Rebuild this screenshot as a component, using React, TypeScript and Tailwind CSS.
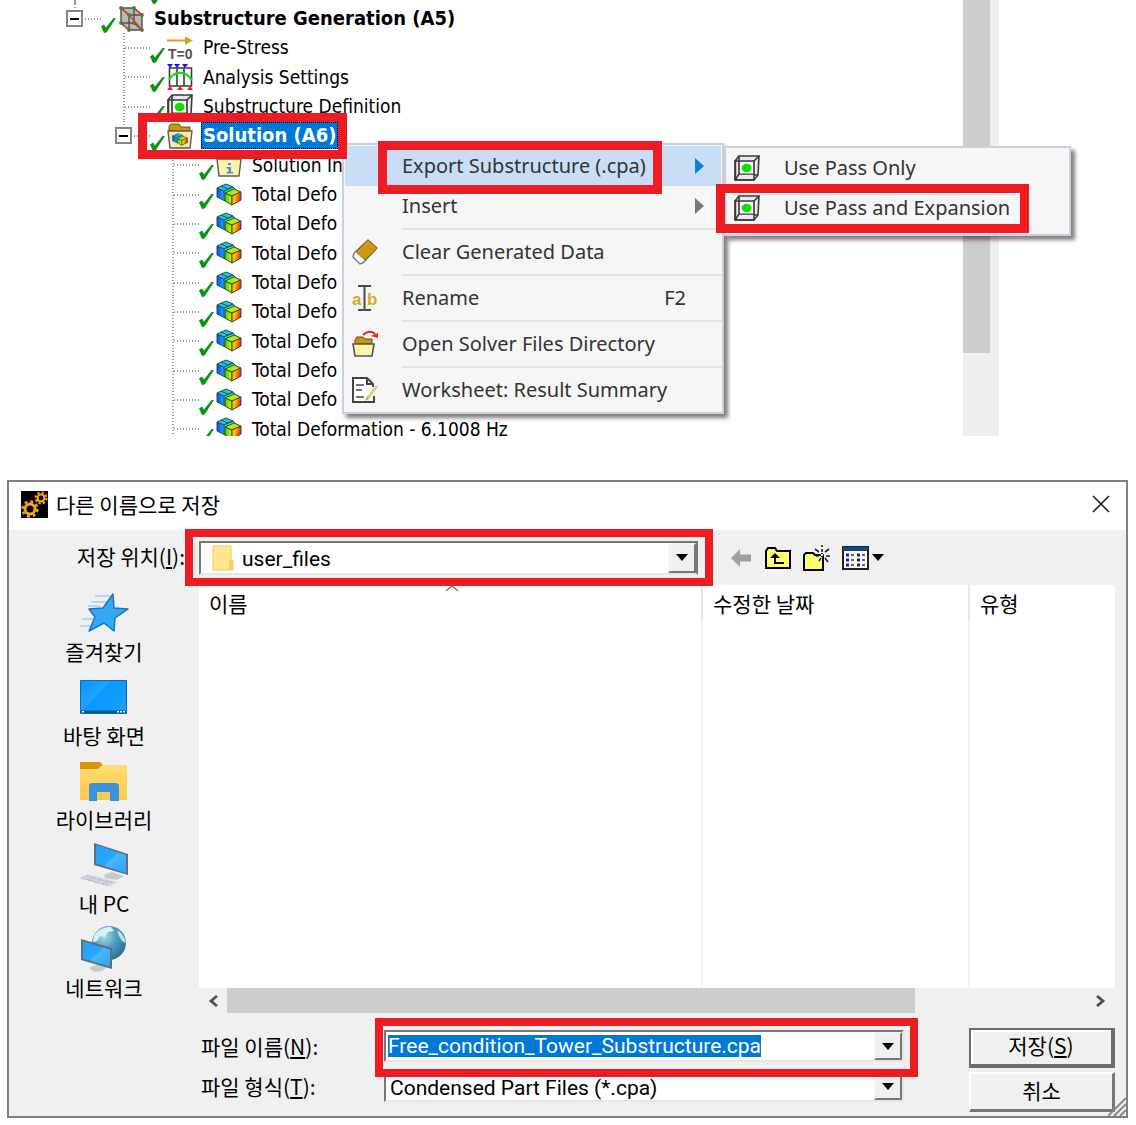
import { useState } from 'react'
import type { ReactNode } from 'react'

type IconName = 'substructure' | 'prestress' | 'analysis' | 'cube' | 'solution' | 'info' | 'deformation'

interface TreeItem { level: 0 | 1 | 2; label: string; icon: IconName; open?: boolean; selected?: boolean }

const TREE: TreeItem[] = [
  { level: 0, label: 'Substructure Generation (A5)', icon: 'substructure', open: true },
  { level: 1, label: 'Pre-Stress', icon: 'prestress' },
  { level: 1, label: 'Analysis Settings', icon: 'analysis' },
  { level: 1, label: 'Substructure Definition', icon: 'cube' },
  { level: 1, label: 'Solution (A6)', icon: 'solution', open: true, selected: true },
  { level: 2, label: 'Solution In', icon: 'info' },
  ...Array.from({ length: 8 }, (): TreeItem => ({ level: 2, label: 'Total Defo', icon: 'deformation' })),
  { level: 2, label: 'Total Deformation - 6.1008 Hz', icon: 'deformation' },
]

const INDENT = ['pl-[66px]', 'pl-[115px]', 'pl-[164px]']

/* ---------- icons ---------- */

function Gradients() {
  return (
    <svg width="0" height="0" className="absolute" aria-hidden="true">
      <defs>
        <linearGradient id="cold" x1="0" y1="0" x2="1" y2="0">
          <stop offset="0" stopColor="#0a4cff" />
          <stop offset="1" stopColor="#10b8ff" />
        </linearGradient>
        <linearGradient id="warm" x1="0" y1="0" x2="1" y2="0.3">
          <stop offset="0" stopColor="#f4f000" />
          <stop offset="0.5" stopColor="#ffb000" />
          <stop offset="1" stopColor="#ff1800" />
        </linearGradient>
        <linearGradient id="leaf" x1="0" y1="0" x2="1" y2="0">
          <stop offset="0" stopColor="#3cd400" />
          <stop offset="1" stopColor="#d8f400" />
        </linearGradient>
        <linearGradient id="screen" x1="0" y1="0" x2="1" y2="1">
          <stop offset="0" stopColor="#1ea0ff" />
          <stop offset="0.5" stopColor="#2aa8ff" />
          <stop offset="0.52" stopColor="#48b6ff" />
          <stop offset="1" stopColor="#2aa5fb" />
        </linearGradient>
        <linearGradient id="desk" x1="0" y1="0" x2="1" y2="0.7">
          <stop offset="0" stopColor="#0a96ff" />
          <stop offset="0.45" stopColor="#1ea2ff" />
          <stop offset="0.46" stopColor="#0898ff" />
          <stop offset="1" stopColor="#18a0ff" />
        </linearGradient>
        <linearGradient id="folder" x1="0" y1="0" x2="0" y2="1">
          <stop offset="0" stopColor="#ffdc73" />
          <stop offset="1" stopColor="#fbc94a" />
        </linearGradient>
        <radialGradient id="globe" cx="0.35" cy="0.3" r="0.75">
          <stop offset="0" stopColor="#a8dcea" />
          <stop offset="0.5" stopColor="#4f9dbd" />
          <stop offset="1" stopColor="#2b6d8f" />
        </radialGradient>
      </defs>
    </svg>
  )
}

function Check() {
  return (
    <svg viewBox="0 0 15 15" className="h-[15px] w-[15px] shrink-0 self-end">
      <path d="M0 8.5 3 6.6 5 9.6 12.6 0H15L5.6 14.4 3 15Z" fill="#0a9414" />
    </svg>
  )
}

function CubeIcon() {
  return (
    <svg viewBox="0 0 26 26" className="h-[26px] w-[26px] shrink-0" fill="none" stroke="#3a3a3a" strokeWidth="1.6">
      <path d="M5 1h20l-1 19-4 5H1V6Z" fill="#e9e9e9" />
      <path d="M5 1v5M20 6l5-5M5 19h15M1 25l4-6V6M20 20h4" />
      <path d="M6 7h13v11.4H6Z" fill="#fff" stroke="none" />
      <ellipse cx="12.6" cy="13" rx="5" ry="4.2" fill="#0be000" stroke="none" />
      <path d="M1.4 6H20v19H1.4Z" />
    </svg>
  )
}

function DeformationShapes() {
  return (
    <g stroke="#34484a" strokeWidth="1" strokeLinejoin="round">
      <path d="M1 5v9l8 4V8Z" fill="url(#cold)" />
      <path d="M1 5 10 1l7 3-9 4Z" fill="#10d0e8" />
      <path d="M5 3.2 12 6" fill="none" />
      <path d="M8 8l9-4 2 2v6l-9 5-2-1Z" fill="#14e0b0" />
      <path d="M9 10v8l7 4v-9Z" fill="url(#leaf)" />
      <path d="M9 10l9-4 7 3-9 4Z" fill="#b4ec00" />
      <path d="M16 13l9-4v8l-9 5Z" fill="url(#warm)" />
    </g>
  )
}

function TreeIcon({ name }: { name: IconName }) {
  if (name === 'cube') return <CubeIcon />
  return (
    <svg viewBox="0 0 26 26" className="h-[26px] w-[26px] shrink-0">
      {name === 'substructure' && (
        <>
          <path d="M3 2h13l8 7v15H11l-8-7Z" fill="#b9b9b9" />
          <path d="M3 2h13v15H3ZM11 9h13v15H11ZM3 2l8 7M16 2l8 7M16 17l8 7M3 17l8 7" fill="none" stroke="#505050" strokeWidth="1.4" />
          <path d="M3 2l8 7M16 2l8 7M3 17l8 7M11 9l13 15" stroke="#e8322c" strokeWidth="1.6" />
          {[[3, 2], [16, 2], [3, 17], [16, 17], [11, 9], [24, 9], [11, 24], [24, 24]].map(([x, y]) => (
            <circle key={`${x}-${y}`} cx={x} cy={y} r="1.9" fill="#4f7d33" />
          ))}
        </>
      )}
      {name === 'prestress' && (
        <>
          <path d="M0 4.6h18V1.4l8 4.2-8 4.2V6.600H0Z" fill="#d2a21e" />
          <text x="1" y="24" fontSize="14" fontWeight="700" fill="#555" fontFamily="Liberation Sans">T=0</text>
        </>
      )}
      {name === 'analysis' && (
        <>
          <path d="M2.5 4h22v18h-22ZM10 4v18M17 4v18" fill="none" stroke="#3c3c3c" strokeWidth="1.6" />
          <path d="M2 16C7 7 18 6 25 16" fill="none" stroke="#12e012" strokeWidth="2.2" />
          <path d="M0 0h6L3 4ZM7 0h6l-3 4ZM15 0h6l-3 4Z" fill="#1414ff" />
          <path d="M0 26l3-4 3 4ZM10 26l3-4 3 4ZM20 26l3-4 3 4Z" fill="#ff1414" />
        </>
      )}
      {name === 'solution' && (
        <>
          <path d="M2 8V3l2-2h8l2 3h9v5Z" fill="#c8960c" stroke="#6b5310" />
          <path d="M1 8h24l-2 17H3Z" fill="#f8eaa6" stroke="#5a5a5a" strokeWidth="1.4" />
          <g transform="translate(5 10) scale(.62 .56)"><DeformationShapes /></g>
        </>
      )}
      {name === 'info' && (
        <>
          <path d="M1 7h24l-2 17H3Z" fill="#fbf3a8" stroke="#5a5a5a" strokeWidth="1.4" />
          <path d="M12 11h3v2h-3ZM10.5 15H15v5h2v1.6h-6.5V20h2v-3.4h-2Z" fill="#3c8cf0" />
        </>
      )}
      {name === 'deformation' && <g transform="translate(0 1)"><DeformationShapes /></g>}
    </svg>
  )
}

function EraserIcon() {
  return (
    <svg viewBox="0 0 26 26" className="h-[26px] w-[26px]">
      <path d="M16 1l9 8L11 24 8 25 1 18l1-4Z" fill="#fff" stroke="#777" strokeWidth="1.4" />
      <path d="M16 1l9 8L13 21 4 13Z" fill="#cb9a13" stroke="#8c6d16" />
    </svg>
  )
}

function RenameIcon() {
  return (
    <svg viewBox="0 0 26 26" className="h-[26px] w-[26px]">
      <text x="0" y="20" fontSize="17" fontWeight="700" fill="#d9ab2c" fontFamily="Liberation Sans">a</text>
      <text x="15" y="20" fontSize="17" fontWeight="700" fill="#d9ab2c" fontFamily="Liberation Sans">b</text>
      <path d="M6 1h13M6 25h13M12.5 1v24" stroke="#4a4a4a" strokeWidth="2" />
    </svg>
  )
}

function OpenFolderIcon() {
  return (
    <svg viewBox="0 0 26 26" className="h-[26px] w-[26px]">
      <path d="M3 13V9l2-3h6l2 2h7v5Z" fill="#c8960c" stroke="#5c4a16" />
      <path d="M1 13h21l-2 12H3Z" fill="#fdf6a4" stroke="#555" strokeWidth="1.6" />
      <path d="M11 4c4-4 9-4 12-1" fill="none" stroke="#ff1a1a" strokeWidth="2" />
      <path d="M19 5l7-3v5Z" fill="#ff1a1a" />
    </svg>
  )
}

function WorksheetIcon() {
  return (
    <svg viewBox="0 0 26 26" className="h-[26px] w-[26px]" fill="none" stroke="#444" strokeWidth="2">
      <path d="M22 19v6H1V1h14l6 6v3" fill="#fff" />
      <path d="M15 1v6h6" />
      <path d="M4 8h8M4 13h6M4 20h8" strokeWidth="1.6" />
      <path d="M25 9 15 22" stroke="#e3c878" strokeWidth="2.6" />
      <path d="M15 19l-2 5 4-2Z" fill="#d0a838" stroke="none" />
    </svg>
  )
}

function DownArrow() {
  return (
    <svg viewBox="0 0 12 7" className="h-[7px] w-3">
      <path d="M0 0h12L6 7Z" fill="#000" />
    </svg>
  )
}

function GearsIcon() {
  return (
    <svg viewBox="0 0 27 27" className="h-[27px] w-[27px]">
      <path d="M0 0h27v27H0Z" fill="#000" />
      <circle cx="9" cy="18" r="5" fill="none" stroke="#f5a81c" strokeWidth="3" />
      <circle cx="9" cy="18" r="7.5" fill="none" stroke="#f5a81c" strokeWidth="2.4" strokeDasharray="3 2.9" />
      <circle cx="20" cy="7" r="3.5" fill="none" stroke="#f5a81c" strokeWidth="2.2" />
      <circle cx="20" cy="7" r="5.5" fill="none" stroke="#f5a81c" strokeWidth="2" strokeDasharray="2.3 2" />
    </svg>
  )
}

function StarIcon() {
  return (
    <svg viewBox="0 0 50 40" className="h-10 w-[50px]">
      <path d="M16 3h17M12 9h18M9 13h12M3 26h12M1 33h12" stroke="#7cc0ec" strokeWidth="1" />
      <path d="M34 1l1 14 14 1-13 9-1 13-10-8-15 8 6-14-6-8 14-1Z" fill="#35a8f5" stroke="#1876b8" strokeWidth="1.5" strokeLinejoin="round" />
    </svg>
  )
}

function DesktopIcon() {
  return (
    <svg viewBox="0 0 47 34" className="h-[34px] w-[47px]">
      <path d="M.5.5h46v33H.5Z" fill="url(#desk)" stroke="#0b6cb0" />
      <path d="M1 30.500h45V33H1Z" fill="#07568f" />
      <path d="M2 31h2v1.500H2ZM37 31h2v1.500h-2ZM40 31h2v1.500h-2ZM43 31h2v1.500h-2Z" fill="#fff" />
    </svg>
  )
}

function LibraryIcon() {
  return (
    <svg viewBox="0 0 47 41" className="h-[41px] w-[47px]">
      <path d="M0 1h20l3 3-3 5H0Z" fill="#d9960a" />
      <path d="M0 8h18l4-4h24l1 1v34H0Z" fill="url(#folder)" />
      <path d="M9 40V25q0-3 3-3h23q4 0 4 3v15h-9v-9H17v9Z" fill="#3b93dc" />
    </svg>
  )
}

function PcIcon() {
  return (
    <svg viewBox="0 0 52 46" className="h-[46px] w-[52px]">
      <path d="M26 33l8-3 12 4-7 4-12-2Z" fill="#c3cad1" />
      <path d="M16 1l34 11v21L16 23Z" fill="#5d6f7c" />
      <path d="M18 3l30 10v18L18 21.500Z" fill="url(#screen)" />
      <path d="M0 36l10-4 30 8-8 5Z" fill="#d5dae0" />
      <path d="M4 36l26 7M8 34l27 7M10 39l6-4M17 41l7-4M24 43l7-4" stroke="#b4bcc5" strokeWidth="1" strokeDasharray="3 1" />
    </svg>
  )
}

function NetworkIcon() {
  return (
    <svg viewBox="0 0 46 46" className="h-[46px] w-[46px]">
      <circle cx="28" cy="17" r="17" fill="url(#globe)" />
      <path d="M13 10c4-7 11-9 17-9l3 4-6 1-3 5-5-1-3 5-4 1Z" fill="#d9eff2" />
      <path d="M36 4c5 3 8 8 9 13l-4-2-3-5Z" fill="#bfe2ea" />
      <path d="M8 42l8-4 10 3-5 4-8 1Z" fill="#c3cad1" />
      <path d="M0 13l31 9v21L0 34Z" fill="#5d6f7c" />
      <path d="M2 15.500l27 8v17L2 32.500Z" fill="url(#screen)" />
    </svg>
  )
}

/* ---------- pieces ---------- */

// red annotation frame laid over a control
function Mark({ className }: { className: string }) {
  return <span className={`pointer-events-none absolute z-20 border-[#ed1c24] ${className}`} />
}

function TreeRow({ item }: { item: TreeItem }) {
  const bold = item.level === 0 || item.selected
  return (
    <li className={`flex ${INDENT[item.level]}`}>
      <div className="relative flex w-[35px] shrink-0 items-center">
        {item.open ? (
          <>
            <span className="absolute left-2 top-0 h-1.5 w-[2px] bg-[repeating-linear-gradient(#999_0_1px,transparent_1px_3px)]" />
            <button aria-label="Collapse" className="flex h-[17px] w-[17px] items-center justify-center border-2 border-[#848484] bg-white">
              <span className="h-[2px] w-[9px] bg-black" />
            </button>
            <span className="ml-[2px] h-[2px] flex-1 bg-[repeating-linear-gradient(90deg,#999_0_1px,transparent_1px_3px)]" />
          </>
        ) : (
          <>
            <span className="ml-2 w-[2px] self-stretch bg-[repeating-linear-gradient(#999_0_1px,transparent_1px_3px)]" />
            <span className="h-[2px] flex-1 bg-[repeating-linear-gradient(90deg,#999_0_1px,transparent_1px_3px)]" />
          </>
        )}
      </div>
      <div className="relative flex items-center">
        <Check />
        <span className="ml-[2px]"><TreeIcon name={item.icon} /></span>
        <span className={`ml-2 whitespace-nowrap px-0.5 leading-[27px] ${bold ? 'text-[20px] font-bold' : 'text-[19px]'} ${item.selected ? 'bg-[#0078d7] text-white outline-1 -outline-offset-1 outline-dotted outline-black' : 'text-black'}`}>
          {item.label}
        </span>
        {item.selected && <Mark className="-inset-y-2 -left-3 -right-[9px] border-[9px]" />}
      </div>
    </li>
  )
}

interface MenuItemProps { label: string; icon?: ReactNode; shortcut?: string; arrow?: string; active?: boolean; mark?: string; children?: ReactNode }

function MenuItem({ label, icon, shortcut, arrow, active, mark, children }: MenuItemProps) {
  return (
    <li className={`relative mx-px ${active ? 'bg-[#c9def5]' : ''}`}>
      <button className="flex h-10 w-full items-center pl-[7px] pr-[17px] text-left">
        <span className="w-[50px] shrink-0">{icon}</span>
        <span className="flex-1 whitespace-nowrap">{label}</span>
        {shortcut && <span className="mr-[18px]">{shortcut}</span>}
        {arrow && (
          <svg viewBox="0 0 9 16" className="h-4 w-[9px]"><path d="M0 0l9 8-9 8Z" fill={arrow} /></svg>
        )}
      </button>
      {mark && <Mark className={mark} />}
      {children}
    </li>
  )
}

function Separator() {
  return <li className="ml-[58px] flex h-1.5 items-center"><hr className="w-full border-t-2 border-[#e1e3e7]" /></li>
}

function ContextMenu() {
  return (
    <ul className="absolute left-[342px] top-[143px] z-10 w-[382px] border-2 border-[#ccd0de] bg-[#f6f6f6] pb-0.5 pt-px font-['Noto_Sans',sans-serif] text-[20px] leading-7 text-[#333] shadow-[4px_4px_4px_rgba(0,0,0,0.5)]">
      <MenuItem label="Export Substructure (.cpa)" arrow="#0f7fdc" active mark="-top-[5px] -bottom-2 left-[33px] w-[284px] border-[9px]">
        <ul className="absolute left-full top-0 ml-[3px] w-[347px] border-2 border-[#ccd0de] bg-[#f6f6f6] pb-1.5 shadow-[4px_4px_4px_rgba(0,0,0,0.5)]">
          <SubItem label="Use Pass Only" />
          <SubItem label="Use Pass and Expansion" mark />
        </ul>
      </MenuItem>
      <MenuItem label="Insert" arrow="#777" />
      <Separator />
      <MenuItem label="Clear Generated Data" icon={<EraserIcon />} />
      <Separator />
      <MenuItem label="Rename" icon={<RenameIcon />} shortcut="F2" />
      <Separator />
      <MenuItem label="Open Solver Files Directory" icon={<OpenFolderIcon />} />
      <Separator />
      <MenuItem label="Worksheet: Result Summary" icon={<WorksheetIcon />} />
    </ul>
  )
}

function SubItem({ label, mark }: { label: string; mark?: boolean }) {
  return (
    <li className="relative">
      <button className="flex h-10 w-full items-center pl-2 text-left">
        <span className="w-[50px] shrink-0"><CubeIcon /></span>
        <span className="whitespace-nowrap">{label}</span>
      </button>
      {mark && <Mark className="-bottom-[5px] -left-[10px] -top-1 right-[40px] border-[9px]" />}
    </li>
  )
}

function DropButton() {
  return (
    <span className="pointer-events-none absolute inset-y-0 right-0 flex w-7 items-center justify-center border-2 border-b-[#777] border-l-[#f4f4f4] border-r-[#777] border-t-[#f4f4f4] bg-[#f0f0f0]">
      <DownArrow />
    </span>
  )
}

const PLACES = [
  { label: '즐겨찾기', icon: <StarIcon /> },
  { label: '바탕 화면', icon: <DesktopIcon /> },
  { label: '라이브러리', icon: <LibraryIcon /> },
  { label: '내 PC', icon: <PcIcon /> },
  { label: '네트워크', icon: <NetworkIcon /> },
]

const FIELD = 'relative h-8 flex-1 border-2 border-b-[#e6e6e6] border-l-[#777] border-r-[#e6e6e6] border-t-[#777] bg-white'
const LATIN = "font-['Roboto','Noto_Sans_CJK_KR',sans-serif] text-[21px]"

function SaveDialog() {
  const [fileName, setFileName] = useState('Free_condition_Tower_Substructure.cpa')

  return (
    <section className="relative ml-[7px] mr-2 border-2 border-[#808080] bg-[#f0f0f0] font-['Noto_Sans_CJK_KR',sans-serif] text-[21px] leading-7 text-black">
      <header className="flex h-12 items-center bg-white pb-1 pl-3 pr-4">
        <GearsIcon />
        <h1 className="ml-2 flex-1">다른 이름으로 저장</h1>
        <button aria-label="닫기">
          <svg viewBox="0 0 18 18" className="h-[18px] w-[18px]"><path d="M1 1l16 16M17 1 1 17" stroke="#222" strokeWidth="1.6" /></svg>
        </button>
      </header>

      <div className="grid grid-cols-[190px_1fr] pr-[11px]">
        <label htmlFor="place" className="self-center pb-1 pr-3.5 text-right">저장 위치(<u>I</u>):</label>
        <div className="flex h-[55px] items-center">
          <div className="relative h-[34px] w-[499px] border-2 border-b-[#e6e6e6] border-l-[#777] border-r-[#777] border-t-[#777] bg-white">
            <svg viewBox="0 0 22 26" className="pointer-events-none absolute left-[11px] top-0.5 h-[26px] w-[22px]">
              <path d="M1 1h18v14h2v10H1Z" fill="#ffe58f" stroke="#ecc95c" />
              <path d="M17 25V17l2-3 2 3v8Z" fill="#f5cf5e" />
            </svg>
            <select id="place" className={`h-full w-full appearance-none bg-transparent pl-[41px] outline-none ${LATIN}`}>
              <option>user_files</option>
            </select>
            <DropButton />
            <Mark className="-bottom-[13px] -left-4 -right-[17px] -top-3.5 border-8" />
          </div>
          <div className="ml-[33px] flex items-center gap-3">
            <button aria-label="뒤로" className="mr-0.5">
              <svg viewBox="0 0 20 18" className="h-[18px] w-5"><path d="M9 0v5.5h11v7H9V18L0 9Z" fill="#a0a0a0" /></svg>
            </button>
            <button aria-label="한 수준 위로">
              <svg viewBox="0 0 26 22" className="h-[22px] w-[26px]">
                <path d="M1 21V4l2-3h7l2 3h13v17Z" fill="#ffff70" stroke="#000" strokeWidth="2" />
                <path d="M10 6l5 5h-4v4h8v2H9v-6H5Z" fill="#000" />
              </svg>
            </button>
            <button aria-label="새 폴더">
              <svg viewBox="0 0 27 26" className="h-[26px] w-[27px]">
                <path d="M1 25V10l2-2h7l2 2h8v15Z" fill="#ffff70" stroke="#000" strokeWidth="2" />
                <path d="M19 0v2M19 4v3M12 4l4 3M26 4l-4 3M23 11h4M13 11h3M22 13l3 4M18 13l-2 3" stroke="#222" strokeWidth="1.6" />
                <path d="M19 8l2 2-2 2-2-2Z" fill="#fff" stroke="#222" />
              </svg>
            </button>
            <button aria-label="보기" className="flex items-center gap-[3px]">
              <svg viewBox="0 0 27 24" className="h-6 w-[27px]">
                <path d="M1 1h25v22H1Z" fill="#fff" stroke="#222" strokeWidth="2" />
                <path d="M1 1h25v4H1Z" fill="#0b4a8f" />
                <path d="M4 9h3M4 14h3M4 19h3M15 9h3M15 14h3M15 19h3" stroke="#1c1ca0" strokeWidth="3" />
                <path d="M9 9h3M9 14h3M9 19h3M20 9h3M20 14h3M20 19h3" stroke="#333" strokeWidth="1.6" />
              </svg>
              <DownArrow />
            </button>
          </div>
        </div>

        <nav className="flex flex-col items-center gap-2 pt-1">
          {PLACES.map(p => (
            <button key={p.label} className="flex flex-col items-center">
              <span className="flex h-12 items-center">{p.icon}</span>
              <span className="h-7">{p.label}</span>
            </button>
          ))}
        </nav>

        <div>
          <div className="relative bg-white">
            <svg viewBox="0 0 14 7" className="absolute left-[246px] top-0 h-[7px] w-3.5"><path d="M1 6l6-5 6 5" fill="none" stroke="#777" strokeWidth="1.4" /></svg>
            <table className="w-full table-fixed border-collapse text-left">
              <thead>
                <tr className="h-9">
                  <th className="w-[503px] border-r-2 border-[#e8e8e8] pl-2.5 font-normal">이름</th>
                  <th className="w-[267px] border-r-2 border-[#e8e8e8] pl-2.5 font-normal">수정한 날짜</th>
                  <th className="pl-2.5 font-normal">유형</th>
                </tr>
              </thead>
              <tbody>
                <tr className="h-[367px]">
                  <td className="border-r-2 border-[#edf5fc]" />
                  <td className="border-r-2 border-[#edf5fc]" />
                  <td />
                </tr>
              </tbody>
            </table>
          </div>
          <div className="flex h-[25px] items-stretch">
            <button aria-label="왼쪽으로" className="flex w-7 items-center justify-center">
              <svg viewBox="0 0 10 12" className="h-3 w-2.5"><path d="M9 1 3 6l6 5" fill="none" stroke="#505050" strokeWidth="2.8" /></svg>
            </button>
            <div className="flex-1"><div className="h-full w-[80%] bg-[#cdcdcd]" /></div>
            <button aria-label="오른쪽으로" className="flex w-7 items-center justify-center">
              <svg viewBox="0 0 10 12" className="h-3 w-2.5"><path d="M1 1l6 5-6 5" fill="none" stroke="#505050" strokeWidth="2.8" /></svg>
            </button>
          </div>
        </div>

        <div className="col-start-2 flex gap-[65px] pb-1">
          <div className="flex flex-1 flex-col gap-2 pt-[17px]">
            <div className="flex items-center">
              <label htmlFor="file-name" className="w-[185px] pl-0.5">파일 이름(<u>N</u>):</label>
              <div className={`${FIELD} flex items-center pl-0.5`}>
                <input
                  id="file-name"
                  value={fileName}
                  onChange={e => setFileName(e.target.value)}
                  className={`field-sizing-content h-[22px] bg-[#0078d7] text-white outline-none ${LATIN}`}
                />
                <DropButton />
                <Mark className="-bottom-[17px] -left-[11px] -right-4 -top-3.5 border-8" />
              </div>
            </div>
            <div className="flex items-center">
              <label htmlFor="file-type" className="w-[185px] pl-0.5">파일 형식(<u>T</u>):</label>
              <div className={FIELD}>
                <select id="file-type" className={`h-full w-full appearance-none bg-transparent pl-1 outline-none ${LATIN}`}>
                  <option>Condensed Part Files (*.cpa)</option>
                </select>
                <DropButton />
              </div>
            </div>
          </div>
          <div className="flex w-[146px] flex-col gap-1 pt-[15px]">
            <button className="h-10 border-2 border-b-4 border-r-4 border-[#6c6c6c] pb-1 shadow-[inset_2px_2px_#fff]">저장(<u>S</u>)</button>
            <button className="h-10 border-2 border-b-[3px] border-r-[3px] border-b-[#777] border-l-white border-r-[#777] border-t-white pb-1">취소</button>
          </div>
        </div>
      </div>

      <svg viewBox="0 0 18 18" className="absolute bottom-0 right-0 h-[18px] w-[18px]">
        <path d="M0 18 18 0M6 18 18 6M12 18l6-6" stroke="#8a8a8a" strokeWidth="2" />
      </svg>
    </section>
  )
}

export default function App() {
  return (
    <main className="bg-white pb-[7px]">
      <Gradients />
      <section className="relative mb-11 flex h-[436px] overflow-hidden">
        <div className="flex-1 font-['DejaVu_Sans_Condensed','DejaVu_Sans',sans-serif]">
          {/* tail of the row scrolled out above */}
          <div className="flex h-1 overflow-hidden pl-[74px]">
            <span className="w-[76px] border-l-2 border-dotted border-[#999]" />
            <Check />
          </div>
          <ul className="grid h-[440px] auto-rows-fr">
            {TREE.map((item, i) => <TreeRow key={i} item={item} />)}
          </ul>
        </div>
        <div className="mr-[137px] w-9 bg-[#efefef]">
          <div className="h-[353px] w-[27px] bg-[#cdcdcd]" />
        </div>
        <ContextMenu />
      </section>
      <SaveDialog />
    </main>
  )
}
